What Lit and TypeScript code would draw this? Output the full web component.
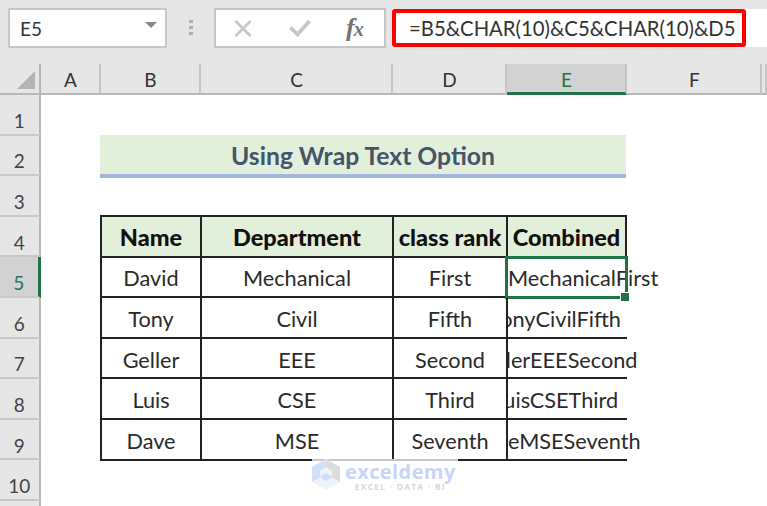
import { LitElement, html, css, svg } from "lit";
import { customElement } from "lit/decorators.js";

const COLS = ["A", "B", "C", "D", "E", "F"];
const ROWS = ["1", "2", "3", "4", "5", "6", "7", "8", "9", "10", ""];
const HEAD = ["Name", "Department", "class rank", "Combined"];
const DATA = [
  ["David", "Mechanical", "First"],
  ["Tony", "Civil", "Fifth"],
  ["Geller", "EEE", "Second"],
  ["Luis", "CSE", "Third"],
  ["Dave", "MSE", "Seventh"],
];

@customElement("app-root")
export class AppRoot extends LitElement {
  static styles = css`
    :host {
      display: block;
      width: 767px;
      height: 506px;
      overflow: hidden;
      position: relative;
      background: #e6e6e6;
      font-family: "Lato", "Open Sans", sans-serif;
      color: #222;
    }
    .toolbar {
      height: 64px;
      box-sizing: border-box;
      padding-top: 8px;
      padding-left: 8px;
      display: flex;
      align-items: flex-start;
    }
    .namebox {
      width: 159px;
      height: 40px;
      box-sizing: border-box;
      background: #fff;
      border: 2px solid #c8c8c8;
      display: flex;
      align-items: center;
      justify-content: space-between;
      padding: 0 8px 0 10px;
      font-size: 19px;
      color: #333;
    }
    .arrow {
      width: 0;
      height: 0;
      border-left: 6px solid transparent;
      border-right: 6px solid transparent;
      border-top: 6px solid #888;
      margin-bottom: 6px;
    }
    .dots {
      width: 47px;
      display: flex;
      flex-direction: column;
      align-items: center;
      gap: 3px;
      padding-top: 12px;
    }
    .dots i {
      width: 4px;
      height: 3px;
      background: #b0b0b0;
    }
    .btns {
      width: 172px;
      height: 40px;
      flex: none;
      box-sizing: border-box;
      background: #fff;
      border: 2px solid #c8c8c8;
      display: flex;
      align-items: center;
      padding-left: 18px;
    }
    .btn-x {
      display: flex;
      flex: none;
    }
    .btn-check {
      display: flex;
      flex: none;
      margin-left: 37px;
    }
    .fx {
      font-family: "Liberation Serif", serif;
      font-style: italic;
      font-weight: bold;
      font-size: 26px;
      color: #737373;
      line-height: 1;
      margin-left: 35px;
      display: flex;
      align-items: baseline;
      white-space: nowrap;
    }
    .fx small {
      font-size: 20px;
      font-weight: bold;
      margin-left: -1px;
    }
    .formula-wrap {
      flex: 1;
      margin-left: 6px;
      margin-top: 1px;
      height: 38px;
      background: #fff;
    }
    .formula {
      width: 354px;
      height: 38px;
      box-sizing: border-box;
      border: 4px solid #f00;
      border-radius: 3px;
      padding-left: 13px;
      display: flex;
      align-items: center;
      font-size: 20.3px;
      color: #333;
      white-space: nowrap;
    }
    .sheet {
      display: grid;
      grid-template-columns: 40.5px 60px 100px 192px 114px 120px 135.5px 5px;
      grid-template-rows: 31px repeat(11, 40.6px);
    }
    .corner {
      border-right: 2px solid #b8b8b8;
      border-bottom: 2px solid #b8b8b8;
      box-sizing: border-box;
      display: flex;
      align-items: flex-end;
      justify-content: flex-end;
      padding: 0 4px 4px 0;
    }
    .ch {
      box-sizing: border-box;
      border-right: 2px solid #c4c4c4;
      border-bottom: 2px solid #b8b8b8;
      display: flex;
      align-items: center;
      justify-content: center;
      font-size: 19px;
      color: #333;
      padding: 2px 0 0 2px;
    }
    .ch.active {
      background: #d2d2d2;
      border-bottom: 3px solid #217346;
      color: #217346;
    }
    .rh {
      grid-column: 1;
      box-sizing: border-box;
      border-right: 2px solid #b8b8b8;
      border-bottom: 2px solid #c8c8c8;
      display: flex;
      align-items: center;
      justify-content: center;
      font-size: 19px;
      color: #444;
      padding-top: 12px;
    }
    .rh.active {
      background: #d2d2d2;
      border-right: 3px solid #217346;
      color: #2f6f5a;
    }
    .canvas {
      grid-column: 2 / -1;
      grid-row: 2 / span 11;
      background: #fff;
      padding-left: 59.5px;
      padding-top: 40px;
      box-sizing: border-box;
      position: relative;
    }
    .title {
      width: 526px;
      height: 43px;
      box-sizing: border-box;
      background: #e2efda;
      border-bottom: 4px solid #a3b6e0;
      display: flex;
      align-items: center;
      justify-content: center;
      padding-top: 2px;
      font-size: 24.7px;
      font-weight: 700;
      color: #44546a;
    }
    .table {
      margin-top: 37px;
      width: 527px;
      display: grid;
      grid-template-columns: 102px 192px 114px 119px;
      grid-auto-rows: 40.6px;
      border-top: 2px solid #222;
      box-sizing: border-box;
    }
    .cell {
      box-sizing: border-box;
      border-right: 2px solid #222;
      border-bottom: 2px solid #222;
      display: flex;
      align-items: center;
      justify-content: center;
      padding-top: 3px;
      font-size: 21.7px;
      color: #2a2a2a;
      white-space: nowrap;
      position: relative;
    }
    .cell.first {
      border-left: 2px solid #222;
    }
    .cell.head {
      background: #e2efda;
      font-weight: 900;
      font-size: 23.5px;
      color: #111;
      padding-top: 1px;
    }
    .cell.open {
      border-right: 0;
      justify-content: stretch;
    }
    .clip {
      width: 100%;
      box-sizing: border-box;
      padding-right: 24px;
      display: flex;
      justify-content: center;
      clip-path: inset(-5px -200px -5px 0);
    }
    .clip span {
      flex: none;
    }
    .sel {
      position: absolute;
      left: -3px;
      top: -2px;
      width: 123px;
      height: 43px;
      box-sizing: border-box;
      border: 3px solid #217346;
    }
    .handle {
      position: absolute;
      right: -4px;
      bottom: -5px;
      width: 8px;
      height: 8px;
      background: #217346;
      outline: 1px solid #fff;
    }
    .mark {
      position: absolute;
      left: 312px;
      top: 459px;
      width: 146px;
      height: 32px;
      background: rgba(255, 255, 255, 0.75);
      display: flex;
      align-items: flex-start;
      gap: 5px;
    }
    .cube {
      flex: none;
      display: flex;
    }
    .mark-text {
      display: flex;
      flex-direction: column;
      align-items: center;
      font-family: "Open Sans", sans-serif;
    }
    .mark-name {
      font-size: 20px;
      font-weight: 700;
      line-height: 21px;
      margin-top: 2px;
      color: #c8d5f6;
      letter-spacing: 0.4px;
    }
    .mark-sub {
      font-size: 8.5px;
      font-weight: 700;
      line-height: 9px;
      color: #d8d8d8;
      letter-spacing: 1.2px;
    }
  `;

  private icoX() {
    return svg`<svg width="18" height="17" viewBox="0 0 18 17"><path d="M1.5 1 L16.5 16 M16.5 1 L1.5 16" stroke="#c6c6c6" stroke-width="2.6" fill="none"/></svg>`;
  }
  private icoCheck() {
    return svg`<svg width="22" height="18" viewBox="0 0 22 18"><path d="M1.5 8.5 L8.5 15.5 L20.5 2" stroke="#c6c6c6" stroke-width="3.8" fill="none"/></svg>`;
  }
  private icoCorner() {
    return svg`<svg width="18" height="18" viewBox="0 0 18 18"><path d="M18 0 V18 H0 Z" fill="#b4b4b4"/></svg>`;
  }
  private icoCube() {
    return svg`<svg width="28" height="31" viewBox="0 0 28 31">
      <path d="M14 0 L28 8 V23 L14 31 L0 23 V8 Z" fill="#eef2fb"/>
      <path d="M14 0 L0 8 V23 L8 18.5 V11.5 L14 8 Z" fill="#d3dff8"/>
      <path d="M14 0 L28 8 V23 L20 18.5 V11.5 L14 8 Z" fill="#dcdcdc"/>
      <path d="M14 14 L20 18 L14 22 L8 18 Z" fill="#cfdcf8"/>
    </svg>`;
  }

  render() {
    return html`
      <div class="toolbar">
        <div class="namebox"><span>E5</span><span class="arrow"></span></div>
        <div class="dots"><i></i><i></i><i></i></div>
        <div class="btns">
          <span class="btn-x">${this.icoX()}</span>
          <span class="btn-check">${this.icoCheck()}</span>
          <span class="fx">f<small>x</small></span>
        </div>
        <div class="formula-wrap">
          <div class="formula">=B5&amp;CHAR(10)&amp;C5&amp;CHAR(10)&amp;D5</div>
        </div>
      </div>
      <div class="sheet">
        <div class="corner">${this.icoCorner()}</div>
        ${COLS.map((c) => html`<div class="ch ${c === "E" ? "active" : ""}">${c}</div>`)}
        <div class="ch"></div>
        ${ROWS.map((r) => html`<div class="rh ${r === "5" ? "active" : ""}">${r}</div>`)}
        <div class="canvas">
          <div class="title">Using Wrap Text Option</div>
          <div class="table">
            ${HEAD.map((h, i) => html`<div class="cell head ${i === 0 ? "first" : ""}">${h}</div>`)}
            ${DATA.map(
              (row, ri) => html`
                ${row.map((v, i) => html`<div class="cell ${i === 0 ? "first" : ""}">${v}</div>`)}
                <div class="cell open">
                  <div class="clip"><span>${row.join("")}</span></div>
                  ${ri === 0 ? html`<div class="sel"><div class="handle"></div></div>` : ""}
                </div>
              `
            )}
          </div>
        </div>
      </div>
      <div class="mark">
        <span class="cube">${this.icoCube()}</span>
        <div class="mark-text">
          <span class="mark-name">exceldemy</span>
          <span class="mark-sub">EXCEL · DATA · BI</span>
        </div>
      </div>
    `;
  }
}
